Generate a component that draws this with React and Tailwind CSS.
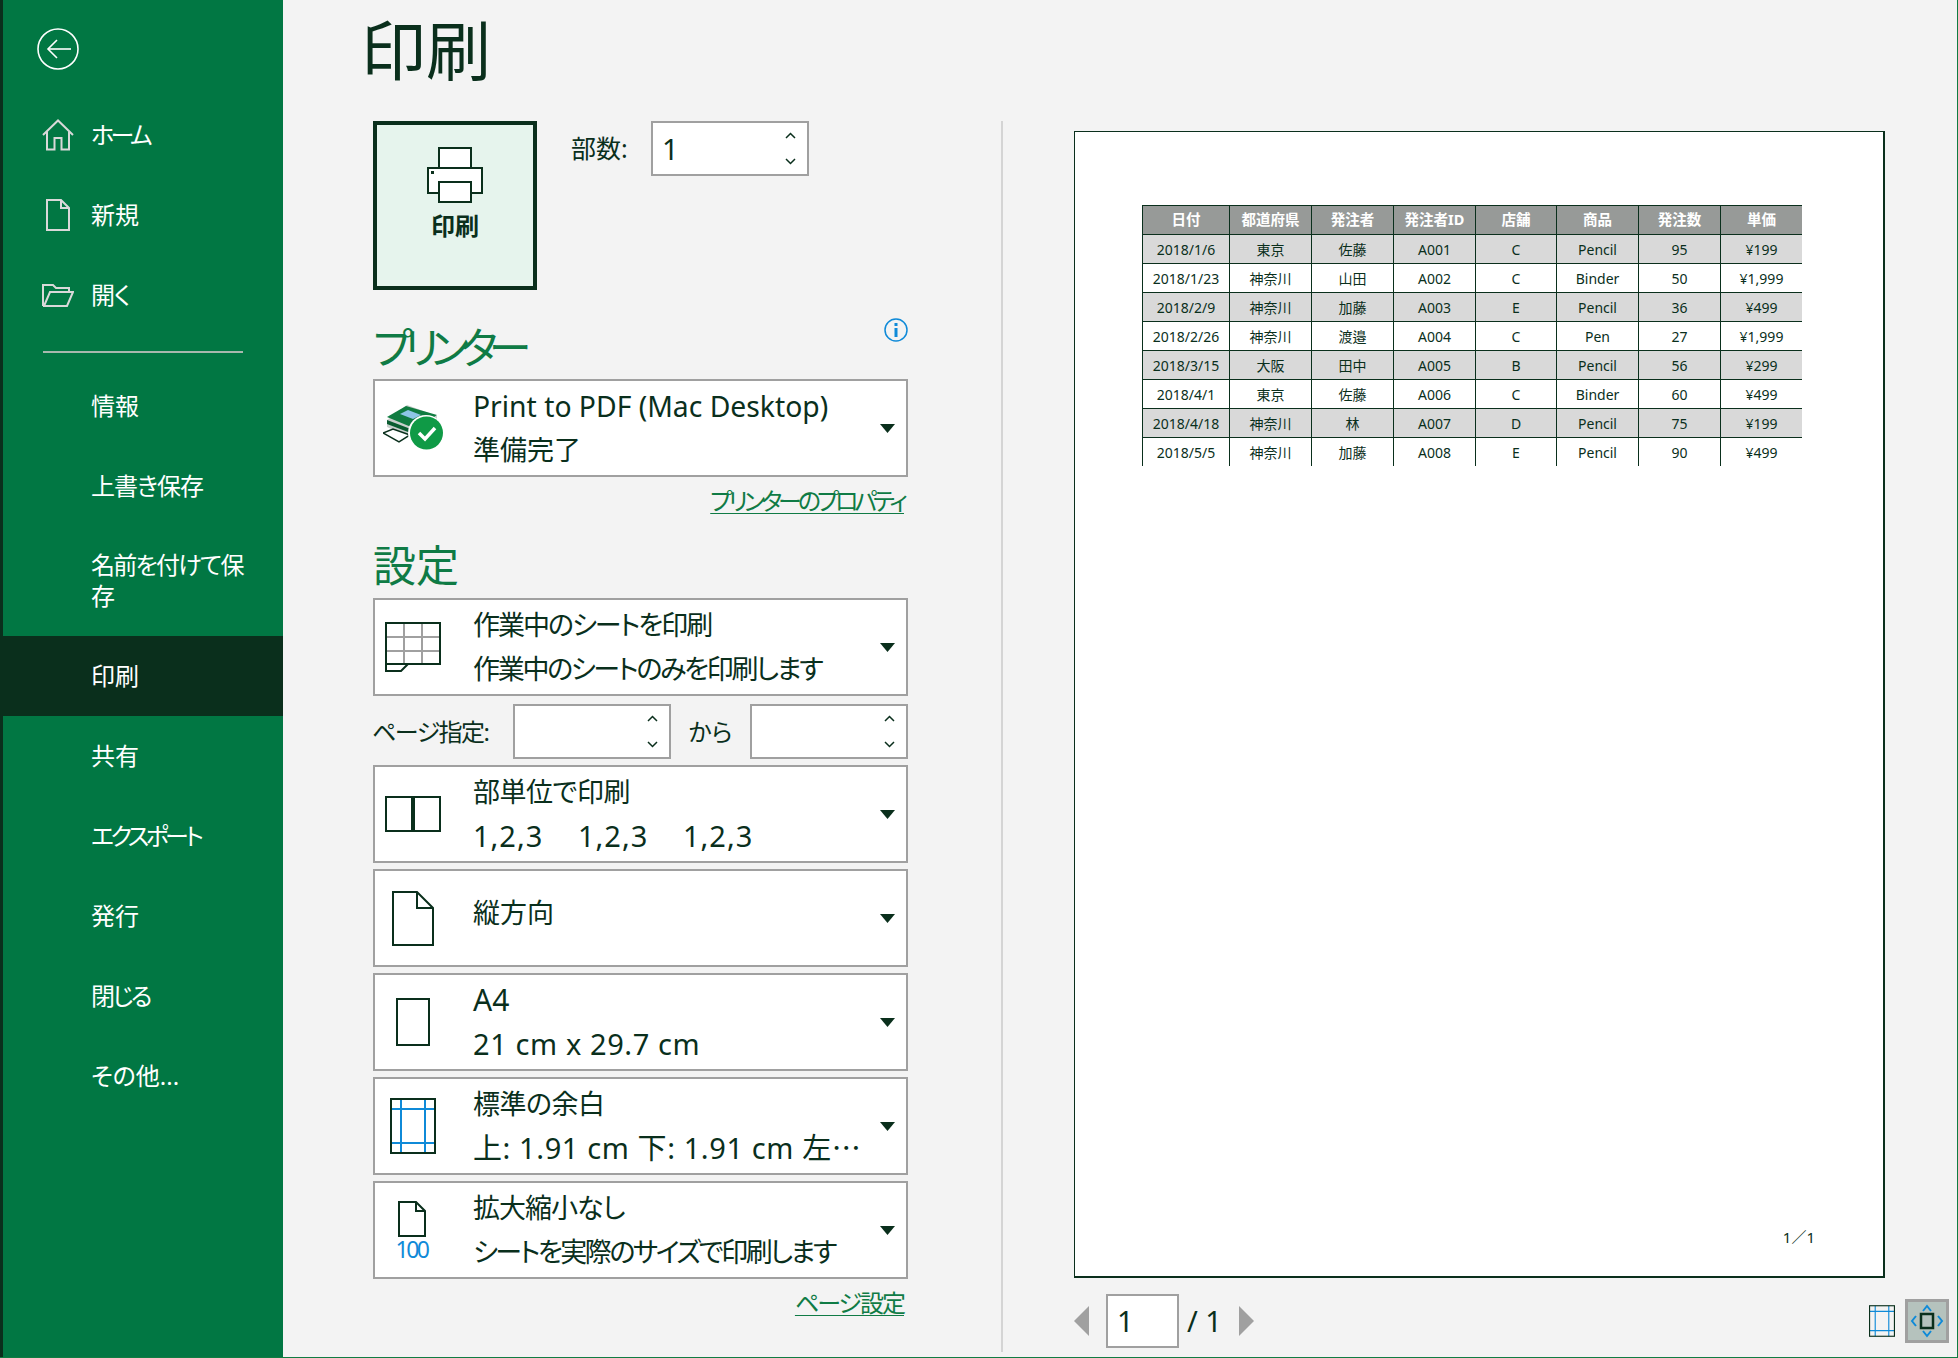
const dark = "#0a2f1c";

const rows = [
  ["2018/1/6", "東京", "佐藤", "A001", "C", "Pencil", "95", "¥199"],
  ["2018/1/23", "神奈川", "山田", "A002", "C", "Binder", "50", "¥1,999"],
  ["2018/2/9", "神奈川", "加藤", "A003", "E", "Pencil", "36", "¥499"],
  ["2018/2/26", "神奈川", "渡邉", "A004", "C", "Pen", "27", "¥1,999"],
  ["2018/3/15", "大阪", "田中", "A005", "B", "Pencil", "56", "¥299"],
  ["2018/4/1", "東京", "佐藤", "A006", "C", "Binder", "60", "¥499"],
  ["2018/4/18", "神奈川", "林", "A007", "D", "Pencil", "75", "¥199"],
  ["2018/5/5", "神奈川", "加藤", "A008", "E", "Pencil", "90", "¥499"],
];
const headers = ["日付", "都道府県", "発注者", "発注者ID", "店舗", "商品", "発注数", "単価"];

// sidebar icons
function HomeIcon() {
  return (
    <svg width="32" height="32" viewBox="0 0 32 32" fill="none" stroke="#d9d9d9" strokeWidth="2">
      <path d="M1 16 16 1.5 31 16" />
      <path d="M5 12.5V30.5H12.5V19H19.5V30.5H27V12.5" />
    </svg>
  );
}
function NewIcon() {
  return (
    <svg width="24" height="32" viewBox="0 0 24 32" fill="none" stroke="#d9d9d9" strokeWidth="2">
      <path d="M1 1H15L23 9V31H1Z" />
      <path d="M15 1V9H23" />
    </svg>
  );
}
function OpenIcon() {
  return (
    <svg width="32" height="23" viewBox="0 0 32 23" fill="none" stroke="#d9d9d9" strokeWidth="2">
      <path d="M1 22V1H11L14 4H27V8" />
      <path d="M1 22H25L31 8H8L2 22" />
    </svg>
  );
}
function BackIcon() {
  return (
    <svg width="42" height="42" viewBox="0 0 42 42" fill="none" stroke="#fff" strokeWidth="1.6">
      <circle cx="21" cy="21" r="20" />
      <path d="M34 21H11" />
      <path d="M20 12 11 21 20 30" />
    </svg>
  );
}

function NavItem({ label, icon, active, tall, track = "" }) {
  return (
    <div
      className={`flex items-center ${tall ? "h-[110px]" : "h-[80px]"} ${active ? "bg-[#0a2f1c]" : ""}`}
    >
      <div className="w-[88px] shrink-0 flex justify-center pl-[30px] pr-[8px]">{icon}</div>
      <div className={`w-[160px] -mt-[2px] text-[24px] leading-[31px] text-white ${track}`}>{label}</div>
    </div>
  );
}

function Chevrons() {
  return (
    <div className="flex flex-col gap-[19px]">
      <svg width="11" height="7" viewBox="0 0 11 7" fill="none" stroke={dark} strokeWidth="1.5">
        <path d="M1 6 5.5 1.5 10 6" />
      </svg>
      <svg width="11" height="7" viewBox="0 0 11 7" fill="none" stroke={dark} strokeWidth="1.5">
        <path d="M1 1 5.5 5.5 10 1" />
      </svg>
    </div>
  );
}

function Spinner({ value }) {
  return (
    <div className="w-[158px] h-[55px] border-2 border-[#a0a0a0] bg-white flex items-center justify-between pl-[9px] pr-[11px]">
      <span className="text-[29px]">{value}</span>
      <Chevrons />
    </div>
  );
}

function Dropdown({ icon, title, sub, titleClass = "", subClass = "", single }) {
  return (
    <div className="h-[98px] border-2 border-[#a0a0a0] bg-white flex items-center pr-[11px]">
      <div className="w-[76px] shrink-0 flex justify-center">{icon}</div>
      <div className={`flex-1 min-w-0 pl-[22px] text-[27px] whitespace-nowrap ${single ? "mb-[10px]" : ""}`}>
        <div className={`leading-[36px] ${titleClass}`}>{title}</div>
        {sub && <div className={`leading-[36px] mt-[8px] ${subClass}`}>{sub}</div>}
      </div>
      <svg width="15" height="9" viewBox="0 0 15 9" fill={dark}>
        <path d="M0 0H15L7.5 9Z" />
      </svg>
    </div>
  );
}

function PrinterCheckIcon() {
  return (
    <svg width="60" height="46" viewBox="0 0 60 46">
      <path d="M4 15 24 0 54 11 54 22 30 34 4 22Z" fill="#c9cfcc" />
      <path d="M4 12 23 1 54 10 33 24Z" fill="#107c41" />
      <path d="M17 9 25 5 38 10 30 14Z" fill="#8ec6e6" />
      <path d="M4 15 33 26 33 30 4 19Z" fill="#0a5c30" />
      <path d="M0 28 10 24 27 30 16 37Z" fill="#fff" stroke={dark} strokeWidth="1.5" />
      <circle cx="43" cy="28" r="18" fill="#fff" />
      <circle cx="43.5" cy="28" r="16.5" fill="#0f9a46" />
      <path d="M36 28 42 34 52 23" fill="none" stroke="#fff" strokeWidth="3.5" />
    </svg>
  );
}
function SheetIcon() {
  return (
    <svg width="56" height="50" viewBox="0 0 56 50" fill="none">
      <path d="M19 0V41M37 0V41M1 15H55M1 29H55" stroke="#a0a0a0" strokeWidth="2" />
      <rect x="1" y="1" width="54" height="41" stroke={dark} strokeWidth="2" />
      <path d="M1 42V49H16L23 42" stroke={dark} strokeWidth="2" />
    </svg>
  );
}
function CollateIcon() {
  return (
    <svg width="56" height="36" viewBox="0 0 56 36" fill="none" stroke={dark}>
      <rect x="1" y="1" width="54" height="34" strokeWidth="2" />
      <path d="M28 1V35" strokeWidth="4" />
    </svg>
  );
}
function PortraitIcon() {
  return (
    <svg width="42" height="55" viewBox="0 0 42 55" fill="none" stroke={dark} strokeWidth="2">
      <path d="M1 1H25L41 17V54H1Z" />
      <path d="M25 1V17H41" />
    </svg>
  );
}
function A4Icon() {
  return (
    <svg width="34" height="48" viewBox="0 0 34 48" fill="none" stroke={dark} strokeWidth="2">
      <rect x="1" y="1" width="32" height="46" />
    </svg>
  );
}
function MarginIcon({ w = 46, h = 56 }) {
  return (
    <svg width={w} height={h} viewBox="0 0 46 56" fill="none">
      <path d="M11 1V55M35 1V55M1 11H45M1 45H45" stroke="#0f8ad8" strokeWidth="2" />
      <rect x="1" y="1" width="44" height="54" stroke={dark} strokeWidth="2" />
    </svg>
  );
}
function ScaleIcon() {
  return (
    <div className="flex flex-col items-center -ml-[3px]">
      <svg width="28" height="36" viewBox="0 0 28 36" fill="none" stroke={dark} strokeWidth="2">
        <path d="M1 1H18L27 10V35H1Z" />
        <path d="M18 1V10H27" />
      </svg>
      <span className="text-[23px] leading-[22px] text-[#0f8ad8] tracking-[-2.5px] mt-[1px]">100</span>
    </div>
  );
}

function PrinterIcon() {
  return (
    <svg width="56" height="56" viewBox="0 0 56 56" fill="#fff" stroke={dark} strokeWidth="2">
      <rect x="12" y="1" width="32" height="22" />
      <rect x="1" y="21" width="54" height="25" />
      <rect x="12" y="35" width="32" height="20" />
      <rect x="4" y="24" width="3" height="3" fill={dark} stroke="none" />
    </svg>
  );
}

function InfoIcon() {
  return (
    <svg width="24" height="24" viewBox="0 0 24 24" fill="none">
      <circle cx="12" cy="12" r="11" stroke="#0f8ad8" strokeWidth="1.5" />
      <rect x="10.5" y="5" width="3" height="3" fill="#0f8ad8" />
      <rect x="10.5" y="10" width="3" height="9" fill="#0f8ad8" />
    </svg>
  );
}

function Cell({ children, head }) {
  return (
    <div
      className={`border-l border-t border-[#0a2f1c] flex items-center justify-center ${
        head ? "font-bold text-white text-[14.5px]" : "text-[14px]"
      }`}
    >
      {children}
    </div>
  );
}

function FitIcon() {
  return (
    <svg width="36" height="36" viewBox="0 0 36 36" fill="none">
      <rect x="12" y="11" width="12" height="14" stroke={dark} strokeWidth="2.5" />
      <path d="M14 8 18 3 22 8M14 28 18 33 22 28M7 13 3 18 7 23M29 13 33 18 29 23" stroke="#0f8ad8" strokeWidth="2" />
    </svg>
  );
}

export default function App() {
  return (
    <div className="w-[1958px] h-[1358px] flex bg-[#f3f3f3] border-b border-r border-[#107c41] overflow-hidden text-[#0a2f1c] font-['Noto_Sans','Noto_Sans_CJK_JP',sans-serif] font-normal [font-feature-settings:'palt']">
      {/* sidebar */}
      <aside className="w-[283px] shrink-0 bg-[#017743] border-l-[3px] border-[#0a2f1c]">
        <div className="h-[95px] pt-[28px] pl-[34px]">
          <BackIcon />
        </div>
        <NavItem label="ホーム" icon={<HomeIcon />} track="tracking-[-3.5px]" />
        <NavItem label="新規" icon={<NewIcon />} />
        <NavItem label="開く" icon={<OpenIcon />} track="tracking-[-1px]" />
        <div className="h-[31px] flex items-center pt-[2px] pl-[40px]">
          <div className="w-[200px] h-[2px] bg-[#a8b8ae]"></div>
        </div>
        <NavItem label="情報" />
        <NavItem label="上書き保存" track="tracking-[-1px]" />
        <NavItem label="名前を付けて保存" tall track="tracking-[-1.7px]" />
        <NavItem label="印刷" active />
        <NavItem label="共有" />
        <NavItem label="エクスポート" track="tracking-[-3.6px]" />
        <NavItem label="発行" />
        <NavItem label="閉じる" track="tracking-[-2.5px]" />
        <NavItem label="その他..." />
      </aside>

      {/* settings column */}
      <main className="w-[718px] shrink-0 pl-[90px] pr-[93px]">
        <div className="h-[121px]">
          <h1 className="text-[65px] leading-[100px] -ml-[12px]">印刷</h1>
        </div>
        <div className="flex h-[169px]">
          <div className="w-[164px] h-[169px] border-4 border-[#0a2f1c] bg-[#e6f4ed] flex flex-col items-center pt-[22px]">
            <PrinterIcon />
            <span className="text-[24px] font-bold leading-[34px] mt-[6px]">印刷</span>
          </div>
          <div className="flex items-start">
            <span className="ml-[34px] w-[80px] text-[25px] leading-[55px]">部数:</span>
            <Spinner value="1" />
          </div>
        </div>

        <div className="h-[89px] flex items-end justify-between">
          <h2 className="text-[43px] leading-[62px] text-[#0f7b45] tracking-[-8.6px]">プリンター</h2>
          <div className="mb-[37px]">
            <InfoIcon />
          </div>
        </div>
        <Dropdown
          icon={<PrinterCheckIcon />}
          title="Print to PDF (Mac Desktop)"
          sub="準備完了"
          titleClass="text-[28.3px]"
        />
        <div className="h-[48px] flex justify-end items-center pr-[4px]">
          <a className="text-[24px] leading-[28px] text-[#0f7b45] underline underline-offset-[3px] decoration-1 tracking-[-4px]">
            プリンターのプロパティ
          </a>
        </div>
        <div className="h-[73px] flex items-end">
          <h2 className="text-[43px] leading-[64px] text-[#0f7b45]">設定</h2>
        </div>

        <div className="flex flex-col gap-[6px]">
          <Dropdown
            icon={<SheetIcon />}
            title="作業中のシートを印刷"
            sub="作業中のシートのみを印刷します"
            titleClass="tracking-[-2px]"
            subClass="tracking-[-2.3px]"
          />
          <div className="flex items-center mt-[2px]">
            <span className="w-[141px] text-[24px] tracking-[-1.5px] -ml-[1px]">ページ指定:</span>
            <Spinner value="" />
            <span className="w-[79px] text-center text-[24px]">から</span>
            <Spinner value="" />
          </div>
          <Dropdown
            icon={<CollateIcon />}
            title="部単位で印刷"
            titleClass="tracking-[-0.5px]"
            sub={
              <div className="flex text-[29px] tracking-[1px]">
                <span className="w-[105px]">1,2,3</span>
                <span className="w-[105px]">1,2,3</span>
                <span>1,2,3</span>
              </div>
            }
          />
          <Dropdown icon={<PortraitIcon />} title="縦方向" single />
          <Dropdown
            icon={<A4Icon />}
            title="A4"
            titleClass="text-[30px]"
            sub="21 cm x 29.7 cm"
            subClass="text-[29px] tracking-[0.6px]"
          />
          <Dropdown
            icon={<MarginIcon />}
            title="標準の余白"
            titleClass="tracking-[-0.5px]"
            sub="上: 1.91 cm 下: 1.91 cm 左⋯"
            subClass="text-[29px] tracking-[0.6px]"
          />
          <Dropdown
            icon={<ScaleIcon />}
            title="拡大縮小なし"
            titleClass="tracking-[-1px]"
            sub="シートを実際のサイズで印刷します"
            subClass="tracking-[-2.5px]"
          />
        </div>
        <div className="h-[48px] flex justify-end items-center pr-[4px]">
          <a className="text-[24px] leading-[28px] text-[#0f7b45] underline underline-offset-[3px] decoration-1 tracking-[-2px]">
            ページ設定
          </a>
        </div>
      </main>

      {/* divider */}
      <div className="pt-[121px] pb-[5px] shrink-0">
        <div className="w-[2px] h-full bg-[#d4d4d4]"></div>
      </div>

      {/* preview */}
      <section className="flex-1 pt-[131px] pl-[71px]">
        <div className="w-[811px] h-[1147px] bg-white border-l border-t border-r-2 border-b-2 border-[#0a2f1c] pt-[73px] pl-[67px] flex flex-col">
          <div className="grid grid-cols-[87px_82px_82px_82px_81px_82px_82px_82px] auto-rows-[29px]">
            {headers.map((h) => (
              <div key={h} className="bg-[#979a98] grid">
                <Cell head>{h}</Cell>
              </div>
            ))}
            {rows.map((row, i) =>
              row.map((c, j) => (
                <div key={`${i}-${j}`} className={`grid ${i % 2 === 0 ? "bg-[#d9d9d9]" : ""}`}>
                  <Cell>{c}</Cell>
                </div>
              ))
            )}
          </div>
          <div className="mt-[760px] pr-[68px] flex justify-end text-[15px]">1／1</div>
        </div>

        <div className="w-[875px] mt-[16px] flex items-center">
          <svg width="15" height="30" viewBox="0 0 15 30" fill="#a0a0a0">
            <path d="M15 0V30L0 15Z" />
          </svg>
          <div className="ml-[17px] w-[73px] h-[54px] border-2 border-[#a0a0a0] bg-white flex items-center pl-[9px] text-[29px]">
            1
          </div>
          <span className="ml-[8px] w-[52px] text-[29px] whitespace-nowrap">/ 1</span>
          <svg width="15" height="30" viewBox="0 0 15 30" fill="#a0a0a0">
            <path d="M0 0V30L15 15Z" />
          </svg>
          <div className="ml-auto flex items-center gap-[10px]">
            <MarginIcon w={26} h={32} />
            <div className="w-[44px] h-[44px] border-[3px] border-[#a0a0a0] bg-[#b5c2bd] flex items-center justify-center">
              <FitIcon />
            </div>
          </div>
        </div>
      </section>
    </div>
  );
}
